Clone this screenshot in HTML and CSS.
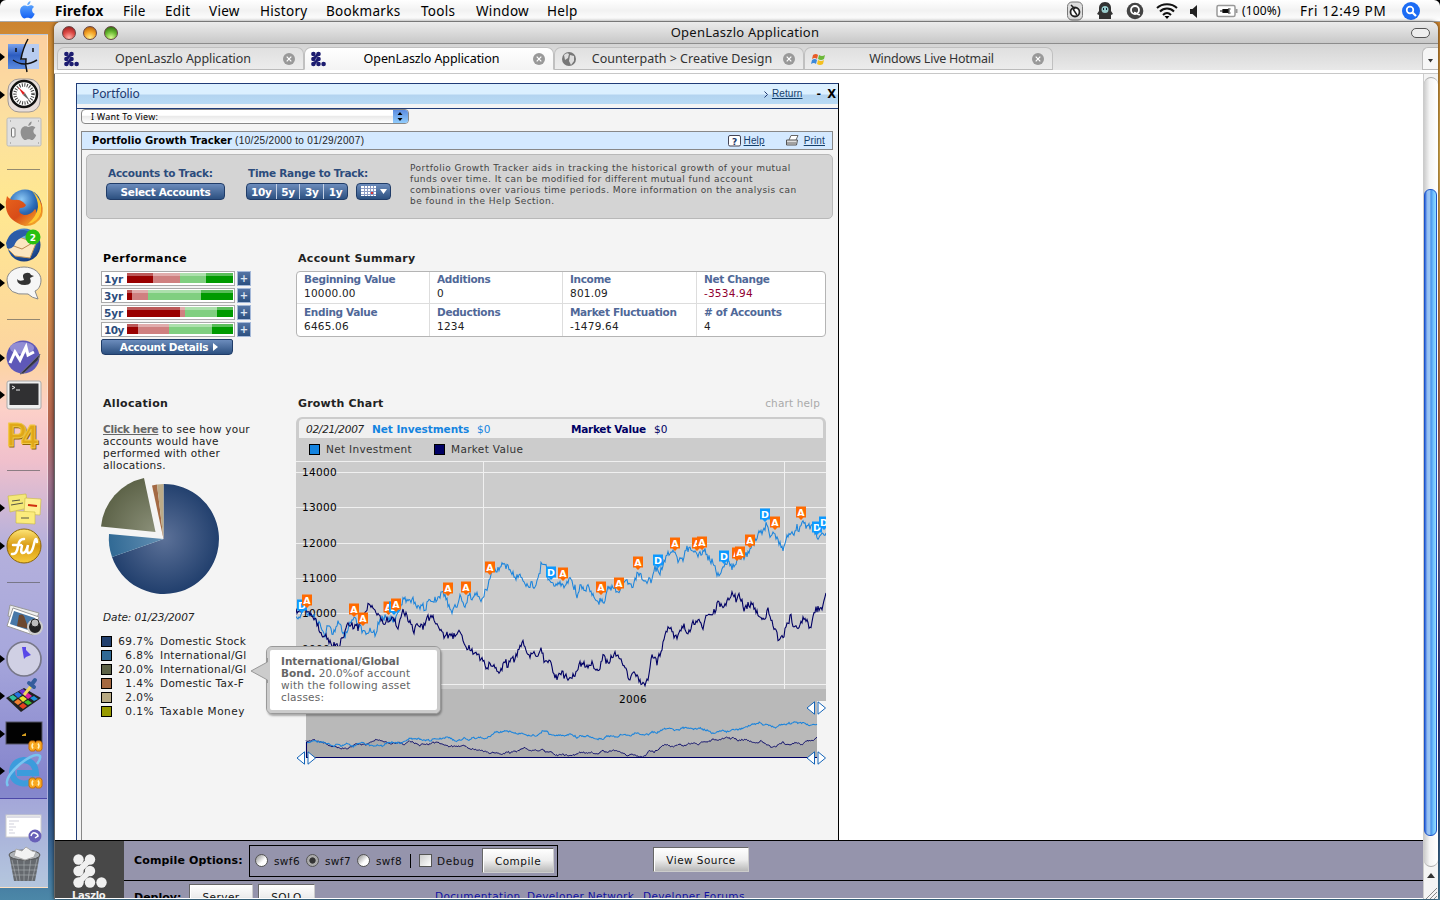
FILE: index.html
```html
<!DOCTYPE html>
<html lang="en">
<head>
<meta charset="utf-8">
<title>OpenLaszlo Application</title>
<link rel="stylesheet" href="styles.css">
</head>
<body>
<svg class="defs" width="0" height="0">
  <defs>
    <radialGradient id="gBlue" cx=".4" cy=".3" r=".8"><stop offset="0" stop-color="#8cc8f4"/><stop offset=".5" stop-color="#2c6cb8"/><stop offset="1" stop-color="#102c6c"/></radialGradient>
    <linearGradient id="gFire" x1="0" y1="0" x2="1" y2="1"><stop offset="0" stop-color="#e8641c"/><stop offset=".5" stop-color="#d84c18"/><stop offset="1" stop-color="#ffc832"/></linearGradient>
    <linearGradient id="gGold" x1="0" y1="0" x2="0" y2="1"><stop offset="0" stop-color="#ffe678"/><stop offset=".5" stop-color="#d89a10"/><stop offset="1" stop-color="#f8cc3c"/></linearGradient>
    <linearGradient id="gFind" x1="0" y1="0" x2="0" y2="1"><stop offset="0" stop-color="#7ca4ec"/><stop offset=".45" stop-color="#2c5cc0"/><stop offset="1" stop-color="#5c8ce0"/></linearGradient>
    <linearGradient id="gApple" x1="0" y1="0" x2="0" y2="1"><stop offset="0" stop-color="#6cb4ff"/><stop offset="1" stop-color="#1460f4"/></linearGradient>
    <radialGradient id="pNavy" gradientUnits="userSpaceOnUse" cx="64" cy="60" r="56"><stop offset="0" stop-color="#5c7198"/><stop offset="1" stop-color="#213f6d"/></radialGradient>
    <radialGradient id="pBlue" gradientUnits="userSpaceOnUse" cx="64" cy="60" r="56"><stop offset="0" stop-color="#6490b4"/><stop offset="1" stop-color="#306994"/></radialGradient>
    <radialGradient id="pOlive" gradientUnits="userSpaceOnUse" cx="55" cy="53" r="56"><stop offset="0" stop-color="#8a8f78"/><stop offset="1" stop-color="#5c6247"/></radialGradient>
    <symbol id="dots" viewBox="0 0 34 36"><g fill="currentColor"><circle cx="5.500" cy="6.500" r="5.200"/><circle cx="17" cy="6.500" r="5.200"/><circle cx="5.500" cy="18" r="5.200"/><circle cx="17" cy="18" r="5.200"/><circle cx="5.500" cy="29.500" r="5.200"/><circle cx="17" cy="29.500" r="5.200"/><circle cx="28.500" cy="29.500" r="5.200"/></g><path d="M16 7.500L6.500 17M16 19L6.500 28.500" stroke="currentColor" stroke-width="6"/></symbol>
    <symbol id="apple" viewBox="0 0 16 18"><path d="M11 0C11 2.500 9.500 4 7.800 4.200 7.700 2.200 9.200.5 11 0zM8 5.200c1 0 1.800-.9 3.300-.9 1.400 0 2.500.7 3.200 1.700-2.800 1.700-2.400 5.500.7 6.700-.6 1.900-2.200 4.800-4 4.800-1.200 0-1.600-.7-3.100-.7s-2 .7-3.100.7C2.800 17.500.6 13.300.6 10.100c0-3.400 2.100-5.600 4.400-5.600 1.400 0 2.200.7 3 .7z"/></symbol>
    <symbol id="close" viewBox="0 0 12 12"><circle cx="6" cy="6" r="6" fill="#999"/><path d="M3.700 3.700l4.600 4.600M8.300 3.700L3.700 8.300" stroke="#fff" stroke-width="1.200"/></symbol>
    <symbol id="badge" viewBox="0 0 14 12"><path d="M2 1h4l1 2 1-2h4l1.500 2v6L12 11H8L7 9l-1 2H2L.5 9V3z" fill="#f8a820" stroke="#c86c08"/><path d="M4.500 3.500q-2 2.500 0 5M9.500 3.500q2 2.500 0 5" stroke="#fff4c0" stroke-width="1.500" fill="none"/></symbol>
    <symbol id="slider" viewBox="0 0 21 14"><path d="M8.500.8v12.400L1 7zM12 .8v12.400L19.500 7z" fill="#fff" stroke="#1464b8"/></symbol>
  </defs>
</svg>

<header class="menubar">
  <svg class="apple" width="16" height="18" fill="url(#gApple)"><use href="#apple"/></svg>
  <nav class="menus">
    <b class="m1">Firefox</b><span class="m2">File</span><span class="m3">Edit</span><span class="m4">View</span><span class="m5">History</span><span class="m6">Bookmarks</span><span class="m7">Tools</span><span class="m8">Window</span><span class="m9">Help</span>
  </nav>
  <div class="status">
    <svg width="18" height="20"><rect x="1.500" y="1" width="15" height="18" rx="4.500" fill="#ddd" stroke="#777"/><circle cx="9" cy="11" r="4.500" fill="#fff" stroke="#222" stroke-width="1.800"/><path d="M7 8l4 6M5 4l4 4" stroke="#222" stroke-width="1.500"/></svg>
    <svg width="18" height="20"><path d="M9 1c4 0 6 3 6 6v3l2 3-2 1v4H3v-4l-2-1 2-3V7c0-3 2-6 6-6z" fill="#333"/><circle cx="9" cy="8.500" r="3.500" fill="#9cc"/><path d="M7.500 7v2M10.500 7v2" stroke="#123"/></svg>
    <svg width="18" height="20"><circle cx="9" cy="10" r="8.300" fill="#444"/><circle cx="9" cy="9" r="4" fill="none" stroke="#fff" stroke-width="1.800"/><path d="M8 11.500c3 0 3 3 6 2" stroke="#fff" stroke-width="1.500" fill="none"/></svg>
    <svg width="22" height="20"><g fill="none" stroke="#111" stroke-width="2"><path d="M1 7c5.500-5 14.500-5 20 0M4 10.500c4-4 10-4 14 0M7 14c2.500-2.500 5.500-2.500 8 0"/></g><path d="M11 18l-2.500-3h5z"/></svg>
    <svg width="10" height="20"><path d="M0 8h2.500L7 4v13L2.500 13H0z" fill="#222"/></svg>
    <svg class="batt" width="22" height="20"><rect x="1" y="4.500" width="18" height="11" rx="1.500" fill="#fff" stroke="#999" stroke-width="1.500"/><path d="M20.500 8v4" stroke="#999" stroke-width="2"/><path d="M4 10h10M7 8.500h5v3H7zM12 8h2.500M12 12h2.500" stroke="#111" stroke-width="1.200"/></svg>
    <span class="pct">(100%)</span><span class="clock">Fri 12:49 PM</span>
    <svg width="18" height="20"><circle cx="9" cy="10" r="9" fill="#1c6cf4"/><circle cx="8" cy="9" r="3.300" fill="none" stroke="#fff" stroke-width="1.700"/><path d="M10.500 11.500l3.500 3.500" stroke="#fff" stroke-width="2.200"/></svg>
  </div>
</header>

<main class="desktop">
  <aside class="dock">
    <div class="slot run"><svg><rect x="8" y="6" width="31" height="25" fill="url(#gFind)"/><path d="M26 6h13v25H26.500l-1-9H21q0-8 5-16z" fill="#b8ccf0"/><path d="M28 1q-5 9-7 20h5q-1 6 1 13M13 22q11 8 24 0M16 10v4M33 10v4" fill="none" stroke="#111" stroke-width="1.500"/></svg></div>
    <div class="slot run"><svg><rect x="8" y="3" width="32" height="33" rx="11" fill="#e8deda" stroke="#a09894"/><circle cx="24" cy="18" r="13" fill="#fff" stroke="#111" stroke-width="2.500"/><circle cx="24" cy="18" r="9" fill="none" stroke="#444" stroke-dasharray="1 1.500" stroke-width="3.500"/><path d="M18 11l7 6-2 2z" fill="#e02020"/><path d="M30 25l-7-6 2-2z" fill="#666"/></svg></div>
    <div class="slot"><svg><rect x="7" y="5" width="34" height="28" rx="1.500" fill="#e0e0e0" stroke="#bbb"/><rect x="11.500" y="15" width="3.500" height="9" rx="1" fill="#f8f8f8" stroke="#777"/><svg x="20" y="8" width="17" height="20" fill="#909090"><use href="#apple"/></svg><path d="M10 8h1M38 8h1M10 30h1M38 30h1" stroke="#888"/></svg></div>
    <div class="slot sep"></div>
    <div class="slot run"><svg><circle cx="25" cy="18" r="16.500" fill="url(#gBlue)"/><path d="M7 8q3 4 7 4 5-1 9 2l3 3q-1 3-6 3-3 5 4 7 7 0 11-6 2 1 1 5 5-5 4-14 4 7 2 16-5 10-17 10Q8 33 6 20q-1-6 1-12z" fill="url(#gFire)"/><path d="M32 3q11 8 9 21-3 10-13 12 9-8 10-17 0-9-6-16z" fill="#ffc832"/></svg></div>
    <div class="slot run"><svg><circle cx="24" cy="19" r="16.500" fill="url(#gBlue)"/><path d="M8 23l11-12 17 6-6 15-15-2z" fill="#fbe6c0" stroke="#c89858"/><path d="M11 19l11 4 12-7" fill="none" stroke="#b88850"/><path d="M6 17Q10 3 24 4q6 1 10 5-8-1-13 3-5 2-7 8-4 4-7 2z" fill="#2c5ca8"/><circle cx="33" cy="11" r="7.500" fill="#28c010"/><text x="33" y="14.500" class="cnt">2</text></svg></div>
    <div class="slot run"><svg><path d="M24 3c10 0 17 6 17 13 0 6-3 10-6 11l3 8q-6-1-10-5-21 2-21-14C7 9 14 3 24 3z" fill="#f6f6f6" stroke="#888"/><path d="M17 15q2 3 7 1-3-6 2-7 4-1 5 2l3 1-4 2q3 7-5 7-8 0-8-6z" fill="#333"/></svg></div>
    <div class="slot sep"></div>
    <div class="slot run"><svg><circle cx="23" cy="18" r="16.500" fill="#5e58b8"/><ellipse cx="22" cy="9" rx="12" ry="6" fill="#a8a4e0" opacity=".7"/><path d="M10 24l5-11 5 8 6-13 2 8 6-3" fill="none" stroke="#fff" stroke-width="3"/><path d="M20 35l20-20-2 6-14 13z" fill="#334" stroke="#667"/></svg></div>
    <div class="slot run"><svg><rect x="7" y="5" width="34" height="28" rx="2" fill="#eee" stroke="#aaa"/><rect x="9.500" y="7.500" width="29" height="21.500" fill="#303032"/><path d="M12 10l3 1.500-3 1.500M16 14h4" stroke="#eee" fill="none"/></svg></div>
    <div class="slot"><svg class="over"><g transform="translate(7 32) scale(.86 1)"><text x="1" y="1" class="p4b">P</text><text x="0" y="0" class="p4">P</text><text x="18" y="3" class="p4b">4</text><text x="17" y="2" class="p4">4</text></g></svg></div>
    <div class="slot sep"></div>
    <div class="slot run"><svg><path d="M8 7l18-2 2 14-18 4z" fill="#f4e878" stroke="#c8b840" stroke-width=".6"/><path d="M25 9l16 1-1 16-16-1z" fill="#fff094" stroke="#c8b840" stroke-width=".6"/><path d="M16 22l19 1v12l-19-1z" fill="#fcec7c" stroke="#c8b840" stroke-width=".6"/><path d="M12 12l8-1M11 16l12-2M21 29h8" stroke="#554"/><path d="M28 16l9 1" stroke="#d03010" stroke-width="2"/></svg></div>
    <div class="slot run"><svg><circle cx="24" cy="19" r="17" fill="url(#gGold)" stroke="#8c6408"/><path d="M12 27q5 1 6-8 1-7 6-7M13 18h8M22 19q-2 7 1 7t5-8q-2 8 1 8t5-9 3-2" fill="none" stroke="#fff" stroke-width="2.500" stroke-linecap="round"/></svg></div>
    <div class="slot sep"></div>
    <div class="slot"><svg><path d="M10 3l29 8-4 9-27-6z" fill="#eee" stroke="#999"/><path d="M13 6l26 9-6 18-26-9z" fill="#fff" stroke="#999"/><path d="M14 9l21 7-4 13-21-7z" fill="#4878a8"/><path d="M19 13q5-2 6 4l4 10-12-3z" fill="#6c4830"/><circle cx="35" cy="25" r="7" fill="#222" stroke="#ccc" stroke-width="2"/><circle cx="35" cy="21" r="4" fill="#bbb" stroke="#222"/></svg></div>
    <div class="slot run"><svg><circle cx="24" cy="19" r="17" fill="#d0d0e4" stroke="#777788" stroke-width="1.700"/><path d="M24 19l-2-12h4v3l5 5-5 2z" fill="#5848e8"/></svg></div>
    <div class="slot run"><svg><path d="M6 21l18-10 17 10-20 14z" fill="#222"/><path d="M9 20l4-2 4 3-4 3z" fill="#30c0a0"/><path d="M14 17l4-2 4 3-4 3z" fill="#2870e0"/><path d="M19 14l4-2 4 3-4 3z" fill="#7030d0"/><path d="M14 25l4-3 4 3-4 3z" fill="#f08030"/><path d="M19 21l4-2 4 3-4 3z" fill="#e8e030"/><path d="M24 18l4-2 4 3-4 3z" fill="#e020a0"/><path d="M19 29l4-3 4 3-4 3z" fill="#e84020"/><path d="M24 25l4-2 4 3-4 2z" fill="#40c030"/><path d="M30 21l4-2 4 3-4 2z" fill="#2090e0"/><path d="M24 18l8-10" stroke="#f0d860" stroke-width="3"/><path d="M29 6l5 4M32 7l3-4" stroke="#345c9c" stroke-width="4" stroke-linecap="round"/></svg></div>
    <div class="slot run"><svg><rect x="6" y="7" width="36" height="22" fill="#020202" stroke="#556"/><path d="M22 20l4-2v3h-4z" fill="#d8a020"/><svg x="28" y="25" width="15" height="12"><use href="#badge"/></svg></svg></div>
    <div class="slot run"><svg><path d="M35 26Q30 32 23 31.500 12 30 12 19 13 9 24 8q11 1 12 13H17" fill="none" stroke="#3c9cdc" stroke-width="6"/><path d="M8 34Q3 27 20 12 35 0 40 4q1 3-3 8" fill="none" stroke="#78c4f0" stroke-width="2.500"/><svg x="28" y="25" width="15" height="12"><use href="#badge"/></svg></svg></div>
    <div class="lower">
      <div class="slot"><svg><rect x="6" y="6" width="35" height="22" fill="#fff" stroke="#ccc"/><path d="M7 8h33" stroke="#bbc"/><path d="M9 12h10M9 15h5M9 18h7M9 21h4M9 24h6" stroke="#bbc" stroke-width=".7"/><circle cx="35" cy="27" r="6.500" fill="#6860b8"/><path d="M31 27q1-4 4-3t3 3l-3 2" stroke="#fff" fill="none" stroke-width="1.500"/></svg></div>
      <div class="slot"><svg><path d="M9 8h31l-5 27H14z" fill="#65696e"/><path d="M12 14l5 21M17 12l3 23M24 12v23M31 12l-3 23M37 13l-5 22M11 19h27M12 24h25M13 29h23" stroke="#a5a9ad" stroke-width=".7"/><ellipse cx="24.500" cy="9" rx="15.500" ry="5" fill="#aeb2b6" stroke="#555"/><path d="M14 10l2-7 6 2 4-4 6 4 4 1-2 5-9 3z" fill="#f2f2f2" stroke="#aaa"/></svg></div>
    </div>
  </aside>

  <section class="window">
    <div class="titlebar">
      <i class="light red"></i><i class="light amber"></i><i class="light green"></i>
      <span class="wtitle">OpenLaszlo Application</span>
      <i class="pill"></i>
    </div>
    <div class="tabs">
      <div class="tab t1"><svg class="fav" width="15" height="16"><use href="#dots"/></svg><span>OpenLaszlo Application</span><svg width="12" height="12"><use href="#close"/></svg></div>
      <div class="tab t2 on"><svg class="fav" width="15" height="16"><use href="#dots"/></svg><span>OpenLaszlo Application</span><svg width="12" height="12"><use href="#close"/></svg></div>
      <div class="tab t3"><svg width="16" height="16"><circle cx="8" cy="8" r="7" fill="#777"/><path d="M3 4q3-3 5-1l-1 4-3 2zM9 4l4 1v5l-3 4-2-4z" fill="#ddd"/></svg><span>Counterpath &gt; Creative Design</span><svg width="12" height="12"><use href="#close"/></svg></div>
      <div class="tab t4"><svg width="16" height="16"><path d="M2 4q3-2 5 0L6 8Q4 6 1 8z" fill="#e85c28"/><path d="M8 4q3 2 6 0l-1 4q-3 2-6 0z" fill="#6cb838"/><path d="M1 9q3-2 5 0l-1 4q-2-2-5 0z" fill="#3c88d8"/><path d="M7 9q3 2 6 0l-1 4q-3 2-6 0z" fill="#f4c020"/></svg><span>Windows Live Hotmail</span><svg width="12" height="12"><use href="#close"/></svg></div>
      <div class="tabmenu"><svg width="5" height="4"><path d="M0 0h5L2.500 3.500z" fill="#333"/></svg></div>
    </div>

    <div class="view">
      <div class="page">
        <div class="canvas">
          <article class="portfolio">
            <header class="phead"><span class="pname">Portfolio</span><span class="ret"><svg width="5" height="7"><path d="M.5.5l3 3-3 3" fill="none" stroke="#203870"/></svg><a>Return</a></span><b class="min">-</b><b class="x">X</b></header>
            <div class="pline"></div>
            <div class="select"><span>I Want To View:</span><i><svg width="14" height="13"><path d="M7 2l2.500 3h-5zM7 11L4.500 8h5z"/></svg></i></div>
            <div class="tracker">
              <div class="thead"><b>Portfolio Growth Tracker</b><span class="range">(10/25/2000 to 01/29/2007)</span>
                <svg width="13" height="12"><rect x=".5" y=".5" width="12" height="10.500" rx="1.500" fill="#fff" stroke="#445"/><text x="6.500" y="9.500" class="q">?</text></svg><a class="help">Help</a>
                <svg width="14" height="12"><path d="M4 5l2-4.500h7L11 5" fill="#fff" stroke="#666"/><path d="M1.500 5h11l-1 5h-10z" fill="#ddd" stroke="#555"/><path d="M2 8h9" stroke="#666"/></svg><a class="print">Print</a>
              </div>
              <div class="controls">
                <div class="c1"><label>Accounts to Track:</label><div class="btn sel">Select Accounts</div></div>
                <div class="c2"><label>Time Range to Track:</label><div class="row"><div class="btn seg"><span>10y</span><span>5y</span><span>3y</span><span>1y</span></div><div class="btn cal"><svg width="30" height="12"><rect x="0" y="1" width="15" height="10" fill="#fff"/><path d="M0 3.500h15M0 6.500h15M0 9.500h15M3.500 1v10M6.500 1v10M9.500 1v10M12.500 1v10" stroke="#8c9cc4"/><path d="M10 7h2v2h-2z" fill="#d33"/><path d="M19 4h7l-3.500 5z" fill="#fff"/></svg></div></div></div>
                <p>Portfolio Growth Tracker aids in tracking the historical growth of your mutual<br>funds over time. It can be modified for different mutual fund account<br>combinations over various time periods. More information on the analysis can<br>be found in the Help Section.</p>
              </div>
              <div class="grid">
                <section class="perf">
                  <h3 class="black">Performance</h3>
                  <div class="bar"><b>1yr</b><i class="track p1"></i><em>+</em></div>
                  <div class="bar"><b>3yr</b><i class="track p3"></i><em>+</em></div>
                  <div class="bar"><b>5yr</b><i class="track p5"></i><em>+</em></div>
                  <div class="bar"><b class="ten">10y</b><i class="track p10"></i><em>+</em></div>
                  <div class="btn details">Account Details <svg width="5" height="8"><path d="M0 0l5 4-5 4z" fill="#fff"/></svg></div>
                </section>
                <section class="summary">
                  <h3>Account Summary</h3>
                  <div class="cells">
                    <div><b>Beginning Value</b><span>10000.00</span></div><div><b>Additions</b><span>0</span></div><div><b>Income</b><span>801.09</span></div><div><b>Net Change</b><span class="neg">-3534.94</span></div>
                    <div><b>Ending Value</b><span>6465.06</span></div><div><b>Deductions</b><span>1234</span></div><div><b>Market Fluctuation</b><span>-1479.64</span></div><div><b># of Accounts</b><span>4</span></div>
                  </div>
                </section>
                <section class="alloc">
                  <h3>Allocation</h3>
                  <p><b>Click here</b> to see how your<br>accounts would have<br>performed with other<br>allocations.</p>
                  <svg class="pie" width="120" height="118">
                    <path d="M63.500 61V6A55 55 0 1 1 12 79z" fill="url(#pNavy)"/>
                    <path d="M63.500 61L12 79A55 55 0 0 1 9 56z" fill="url(#pBlue)"/>
                    <path d="M55.500 54L1 48.500A55 55 0 0 1 44 0z" fill="url(#pOlive)"/>
                    <path d="M63.500 61L52 7.500l5-1z" fill="#a46a44"/><path d="M63.500 61L57 6.500l6.500-.5z" fill="#bcab88"/>
                  </svg>
                  <div class="date">Date: 01/23/2007</div>
                  <ul>
                    <li><i class="k1"></i><span>69.7%</span><u>Domestic Stock</u></li><li><i class="k2"></i><span>6.8%</span><u>International/Gl</u></li><li><i class="k3"></i><span>20.0%</span><u>International/Gl</u></li><li><i class="k4"></i><span>1.4%</span><u>Domestic Tax-F</u></li><li><i class="k5"></i><span>2.0%</span><u></u></li><li><i class="k6"></i><span>0.1%</span><u class="tm">Taxable Money</u></li>
                  </ul>
                </section>
                <section class="growth">
                  <div class="ghead"><h3>Growth Chart</h3><span>chart help</span></div>
                  <div class="gbox">
                    <div class="readout"><em>02/21/2007</em><b class="ni">Net Investments</b><span class="niv">$0</span><b class="mv">Market Value</b><span class="mvv">$0</span></div>
                    <div class="legend"><i class="lb"></i><span>Net Investment</span><i class="ln"></i><span>Market Value</span></div>
                  </div>
                  <svg id="plot" width="532" height="305" viewBox="296 461 532 305">
                    <path d="M296 461h530v228H296z" fill="#ccc"/><path d="M296 689h530v12h-9v57H306v-57h-10z" fill="#b9b9b9"/>
                    <path d="M296 461.500h530M296 472.500h530M296 507.500h530M296 543.500h530M296 578.500h530M296 613.500h530M296 649.500h530M296 684.500h530M483.500 462v227M784.500 462v227" stroke="#f0f0f0"/>
                    <g class="axis"><text x="302" y="476">14000</text><text x="302" y="511">13000</text><text x="302" y="547">12000</text><text x="302" y="582">11000</text><text x="302" y="617">10000</text><text x="302" y="653">9000</text><text x="619" y="703">2006</text></g>
                  </svg>
                </section>
              </div>
            </div>
          </article>
          <div class="tip"><svg width="18" height="26"><path d="M17.500 1v4L1 14l16.500 9v3" fill="#ccc" stroke="#999"/></svg><div><b>International/Global<br>Bond.</b> 20.0%of account<br>with the following asset<br>classes:</div></div>
        </div>
        <footer class="dev">
          <div class="logo"><svg width="34" height="36"><use href="#dots"/></svg><b>Laszlo</b></div>
          <div class="rows">
            <div class="r1"><b>Compile Options:</b>
              <div class="opts"><i class="radio"></i><span>swf6</span><i class="radio dot"></i><span>swf7</span><i class="radio"></i><span>swf8</span><i class="vbar"></i><i class="check"></i><span class="dbg">Debug</span><button class="cmp">Compile</button></div>
              <button class="vs">View Source</button></div>
            <div class="r2"><b>Deploy:</b><button class="srv">Server</button><button class="solo">SOLO</button><a class="d1">Documentation</a><a class="d2">Developer Network</a><a class="d3">Developer Forums</a></div>
          </div>
        </footer>
      </div>
      <div class="scroll"><div class="gutter"><i class="thumb"></i></div><div class="arrow"><svg width="8" height="5"><path d="M4 0l4 5H0z" fill="#333"/></svg></div><svg width="14" height="13"><path d="M2 13L13 2M6 13l7-7M10 13l3-3" stroke="#888"/></svg></div>
    </div>
  </section>
</main>
<script src="chart.js"></script>
</body>
</html>
```
FILE: chart.js
```js
// Series are key points "x,y"; a small deterministic jitter fills in the daily movement.
const net = "296,620 305,610 315,617 322,630 325,635 328,625 333,633 338,622 345,635 350,622 354,617 360,628 367,635 370,627 375,635 380,618 388,617 395,622 400,607 404,596 407,602 413,600 417,608 422,605 425,610 428,600 433,602 438,597 445,593 449,607 453,611 457,605 460,598 465,610 468,595 473,597 476,593 481,603 485,592 489,583 492,567 498,570 503,564 510,568 515,578 520,573 525,587 532,583 534,589 538,580 542,561 545,563 548,577 555,587 558,581 563,587 570,580 575,588 577,596 580,586 585,590 588,587 592,595 596,601 605,602 608,587 613,588 619,593 623,580 630,582 633,587 638,573 642,578 651,582 655,568 660,573 664,560 668,555 675,553 678,560 683,560 686,550 690,547 698,555 704,550 708,557 712,562 717,573 720,573 723,569 728,563 732,568 737,560 743,557 748,553 753,545 758,535 763,532 767,523 770,537 773,530 778,542 783,549 787,537 790,533 795,532 797,525 799,531 802,520 805,526 812,527 818,537 826,533";
const market = "296,612 305,606 315,620 322,635 327,637 331,645 338,646 343,637 348,625 353,626 358,628 365,612 368,605 373,607 378,615 383,623 390,618 395,620 398,628 402,615 404,610 408,620 414,630 418,622 423,627 428,618 433,618 438,628 443,635 450,635 455,637 459,629 463,642 468,648 475,652 483,660 487,668 490,662 495,667 500,672 505,660 508,667 512,657 515,660 520,645 523,643 528,657 532,652 537,657 541,648 545,663 550,662 555,678 562,673 567,678 573,677 580,663 587,665 591,663 595,668 600,667 603,657 608,663 615,652 620,662 623,663 630,680 635,673 640,683 645,687 648,678 652,657 657,662 662,648 664,642 667,630 671,628 675,637 678,638 684,625 688,635 693,623 698,620 703,627 707,615 713,615 718,603 722,608 727,602 733,593 737,602 739,593 744,608 748,605 753,605 759,618 765,617 768,611 773,623 778,638 783,639 787,623 791,617 794,628 800,625 804,617 810,628 815,610 822,608 826,593";
const marks = "D302,606 A307,601 A354,610 A363,619 A388.5,608 D394,608 A396,605 A448,589 A466,588 A490,568 D551,573 A563,574 A601,588 A619,584 A638,563 D658,561 A675,544 A697,544 A702,543 D724,557 A737,554 A740,553 A750,541 D765,515 A775,523 A801,513 D817,528 D824,523";
const plot = document.getElementById("plot");
const add = (tag, attrs, text) => {
  const el = document.createElementNS("http://www.w3.org/2000/svg", tag);
  for (const k in attrs) el.setAttribute(k, attrs[k]);
  if (text) el.textContent = text;
  plot.appendChild(el);
};
function walk(src, seed) {
  const pts = src.split(" ").map(p => p.split(",").map(Number)), out = [];
  const rnd = () => (seed = (seed * 16807) % 2147483647) / 2147483647 - 0.5;
  for (let i = 0; i < pts.length - 1; i++) {
    const [x0, y0] = pts[i], [x1, y1] = pts[i + 1];
    for (let x = x0; x < x1; x++) out.push([x, y0 + (y1 - y0) * (x - x0) / (x1 - x0) + rnd() * 7]);
  }
  out.push(pts[pts.length - 1]);
  return out;
}
const path = pts => "M" + pts.map(p => p[0].toFixed(1) + " " + p[1].toFixed(1)).join("L");
const mini = pts => pts.map(([x, y]) => [306 + (x - 296) * 511 / 530, 741.5 + (y - 613) * 0.215]);
const n = walk(net, 71), m = walk(market, 333);
add("path", { d: path(mini(m)) + "L817 757L306 757Z", fill: "#aaa" });
add("path", { d: path(mini(m)), class: "navy thin" });
add("path", { d: path(mini(n)), class: "sky" });
add("path", { d: "M306 757.5H817M306.5 742V757", class: "navy" });
add("path", { d: path(n), class: "sky" });
add("path", { d: path(m), class: "navy" });
for (const t of marks.split(" ")) {
  const [x, y] = t.slice(1).split(",").map(Number);
  add("path", { d: `M${x - 5} ${y - 6.5}h10v11h-2.500l-2.500 2.500l-2.500-2.500h-2.500z`, fill: t[0] === "A" ? "#ff6a00" : "#0d99ff" });
  add("text", { x, y: y + 2.7, class: "mark" }, t[0]);
}
add("path", { d: "M826 461h3v228h-3z", fill: "#f4f4f4" });
for (const [x, y] of [[296, 751], [806, 751], [806, 701]]) add("use", { href: "#slider", x, y, width: 21, height: 14 });
```
FILE: styles.css
```css
* { box-sizing: border-box; }
html, body { margin: 0; height: 100%; }
body { width: 1440px; height: 900px; overflow: hidden; display: flex; flex-direction: column; background: #000; font: 11px/14px "DejaVu Sans", Verdana, sans-serif; color: #222; }
svg { display: block; flex: none; }
.defs { position: absolute; }
i { font-style: normal; }
h3, p, ul { margin: 0; padding: 0; }

.menubar { height: 22px; flex: none; display: flex; align-items: center; border-radius: 6px 6px 0 0; background: linear-gradient(#fff, #f2f2f2 50%, #fff); border-bottom: 1px solid #aaa; font: 13.500px/20px "Noto Sans", sans-serif; color: #000; letter-spacing: .3px; }
.apple { margin: -1px 0 0 19px; width: 17px; }
.menus { display: flex; margin-left: 19px; flex: 1; }
.m1 { width: 68px; } .m2 { width: 42px; } .m3 { width: 44px; } .m4 { width: 51px; } .m5 { width: 66px; } .m6 { width: 95px; } .m7 { width: 55px; } .m8 { width: 71px; }
.status { display: flex; align-items: center; gap: 12px; padding-right: 20px; }
.status .batt { margin-left: 4px; }
.pct { font-size: 12px; margin-left: -8px; width: 39px; white-space: nowrap; letter-spacing: .15px; }
.clock { margin-left: 7px; width: 90px; white-space: nowrap; letter-spacing: .7px; }

.desktop { flex: 1; display: flex; background: linear-gradient(#cc8430, #e8b850 15%, #d89048 30%, #b86850 45%, #a07088 52%, #5c64a4 62%, #302c84 78%, #30558c 90%, #4c88a8); }
.dock { width: 48px; margin: 12px 6px 13px 0; padding-top: 3px; background: linear-gradient(#fcd0a0, #fce0a0 10%, #ffe890 20%, #fcd4a0 38%, #fcd0c8 44%, #f0c0cc 50%, #b4b0dc 60%, #a8a8dc 72%, #8484cc 88%, #8ca8cc); border: 1px solid rgba(255,255,255,.35); border-left: 0; }
.slot { height: 37.600px; position: relative; }
.slot > svg { width: 48px; height: 38px; } .slot > .over { overflow: visible; }
.run::before { content: ""; position: absolute; left: 0; top: 15px; border: 4.500px solid transparent; border-left: 5px solid #000; border-right: 0; }
.sep::before { content: ""; position: absolute; left: 7px; right: 7px; top: 18px; border-top: 1px solid rgba(90,90,90,.65); }
.lower { margin-top: 8px; padding-top: 10px; border-top: 1px solid #4c48a8; height: 89px; background: linear-gradient(rgba(255,255,255,.25), rgba(255,255,255,.35)); }
.cnt { font: bold 9px "DejaVu Sans", sans-serif; fill: #fff; text-anchor: middle; }
.p4, .p4b { font: bold 34px "Liberation Sans", sans-serif; fill: #e0a818; stroke: #f0c848; stroke-width: 1px; letter-spacing: 0; }
.p4b { fill: #8c6408; stroke: #8c6408; }

.window { width: 1384px; height: 877px; flex: none; display: flex; flex-direction: column; border-radius: 7px 7px 0 0; overflow: hidden; background: #e6e6e6; box-shadow: 0 0 4px rgba(0,0,0,.7); }
.titlebar { height: 22px; flex: none; display: flex; align-items: center; padding: 0 7px 0 8px; background: linear-gradient(#ececec, #c8c8c8); border-bottom: 1px solid #8c8c8c; }
.light { width: 14px; height: 14px; border-radius: 50%; border: 1px solid #644; margin-right: 7px; }
.red { background: radial-gradient(circle at 50% 90%, #ffb4ac, #dc4844 50%, #8c1818); }
.amber { background: radial-gradient(circle at 50% 90%, #fff08c, #f4a024 50%, #a45408); }
.green { background: radial-gradient(circle at 50% 90%, #dcff94, #68b830 50%, #205c08); }
.wtitle { flex: 1; text-align: center; font: 13px/20px "Noto Sans", sans-serif; color: #111; letter-spacing: .25px; margin: -2px 0 0 -46px; }
.pill { width: 19px; height: 10px; border: 1.500px solid #555; border-radius: 6px; background: #eee; margin-right: 1px; }
.tabs { height: 30px; flex: none; display: flex; align-items: stretch; padding: 3px 0 3px 3px; background: linear-gradient(#d4d4d4, #e8e8e8 88%, #fff 90%); border-bottom: 1px solid #c8c8c8; }
.tab { display: flex; align-items: center; justify-content: space-between; padding: 0 8px 0 6px; border: 1px solid #c0c0c0; border-bottom-color: #bbb; border-radius: 7px 7px 0 0; background: linear-gradient(#e0e0e0, #ececec); font: 12.500px/18px "Noto Sans", sans-serif; color: #333; width: 250px; white-space: nowrap; }
.tab span { position: relative; left: 2px; }
.tab.on { background: linear-gradient(#fff, #f4f4f4); border-bottom-color: #f4f4f4; color: #000; }
.t1 { width: 247px; } .t4 { width: 249px; letter-spacing: -.2px; } .t1, .t2 { letter-spacing: -.08px; }
.t4 { letter-spacing: -.25px; }
.tab .fav { color: #1c1c70; }
.tabmenu { margin-left: auto; width: 16px; border: 1px solid #bbb; border-right: 0; border-radius: 6px 0 0 0; background: #f6f6f6; padding: 11px 0 0 5px; }
.view { flex: 1; display: flex; min-height: 0; background: #fff; border-left: 1px solid #666; }
.page { flex: 1; display: flex; flex-direction: column; min-width: 0; }
.canvas { height: 766px; flex: none; position: relative; padding: 9px 0 0 21px; overflow: hidden; }
.scroll { width: 15px; padding-top: 3px; background: #f4f4f4; border-left: 1px solid #ccc; display: flex; flex-direction: column; }
.gutter { height: 791px; padding-top: 111px; border-radius: 7px; border: 1px solid #aaa; border-width: 1px 0; background: linear-gradient(90deg, #ccc, #f4f4f4 40%, #fff); }
.thumb { display: block; height: 647px; width: 13px; border-radius: 6px; border: 1px solid #1c54c8; background: linear-gradient(90deg, #2c60d8, #90bcf0 20%, #a0c8f4 40%, #4894ec 55%, #70c0fc 75%, #90dcff); }
.arrow { height: 19px; padding: 6px 0 0 3px; }

.portfolio { width: 763px; height: 780px; background: #f4f4f4; border: 1px solid #203c78; border-right-color: #000; }
.phead { height: 20px; display: flex; align-items: center; padding: 0 2px 0 15px; background: linear-gradient(#dcf0ff 50%, #b4d4f0 55%, #b8daf4); }
.pname { font: 12px/20px "Noto Sans", sans-serif; color: #203870; flex: 1; letter-spacing: -.1px; }
.ret { font: 10px/20px "Liberation Sans", sans-serif; color: #103878; display: flex; align-items: center; gap: 3px; letter-spacing: .1px; }
.ret a, .thead a { text-decoration: underline; color: #14406c; }
.min { margin: 0 6px 0 14px; font-size: 11px; color: #000; } .x { font-size: 11.500px; color: #000; }
.pline { height: 5px; border-bottom: 1px solid #203c78; }
.select { margin: 0 0 0 4px; width: 328px; height: 15px; border: 1px solid #888; border-radius: 4px; display: flex; justify-content: space-between; background: linear-gradient(#fff 40%, #eaeaea 50%, #fff); font: 9px/14px "Noto Sans", sans-serif; color: #000; padding-left: 9px; overflow: hidden; letter-spacing: .2px; }
.select i { width: 15px; background: linear-gradient(#5c8ce0, #90ccfc); }
.tracker { margin: 7px 5px 0 4px; border-left: 1px solid #888; height: 712px; }
.thead { height: 19px; border: 1px solid #888; border-left: 0; background: #d4e9ff; display: flex; align-items: center; padding: 0 7px 0 10px; font-size: 10px; }
.thead b { color: #000; letter-spacing: .07px; }
.range { flex: 1; margin-left: 3px; font: 10px/17px "Liberation Sans", sans-serif; letter-spacing: .33px; }
.thead a { margin-left: 3px; font: 10px/17px "Liberation Sans", sans-serif; letter-spacing: .15px; } .thead a.help { margin-right: 20px; } .thead a.print { margin-left: 5px; }
.q { font: bold 9px "DejaVu Sans", sans-serif; text-anchor: middle; fill: #223c6c; }
.controls { margin: 4px 0 0 4px; width: 747px; height: 65px; border: 1px solid #b8b8b8; border-radius: 5px; background: #d4d4d4; display: flex; }
.c1 { width: 140px; margin: 11px 0 0 19px; } .c2 { width: 164px; margin-top: 11px; }
.controls label { display: block; height: 17px; font-weight: bold; font-size: 10.500px; color: #2c4c7c; padding-left: 2px; white-space: nowrap; letter-spacing: -.25px; }
.row { display: flex; gap: 8px; }
.btn { height: 17px; border: 1px solid #203c68; border-radius: 4px; background: linear-gradient(#6c8cbc, #2c5080); color: #fff; font-weight: bold; font-size: 10.500px; line-height: 16px; text-align: center; white-space: nowrap; letter-spacing: -.3px; }
.sel { width: 119px; }
.seg { width: 102px; display: flex; } .seg span { flex: 1; border-right: 1px solid #c4d0e4; height: 15px; } .seg span:first-child { flex: 1.250; } .seg span:last-child { border: 0; }
.cal { width: 35px; padding: 1px 0 0 4px; }
.controls p { font-size: 9px; line-height: 11px; margin-top: 8px; color: #444; white-space: nowrap; letter-spacing: .46px; }
.grid { display: grid; grid-template: 152px 1fr / 195px 531px; padding: 32px 0 0 19px; }
h3 { font-size: 11px; line-height: 14px; color: #222; white-space: nowrap; letter-spacing: .33px; }
.perf h3, .alloc h3 { padding-left: 2px; } .black { color: #000; }
.perf h3, .summary h3 { margin: 1px 0 5px; } .summary h3 { padding-left: 2px; }
.perf h3 { letter-spacing: .42px; }
.bar { width: 150px; height: 15px; margin-bottom: 2px; display: flex; background: linear-gradient(#aaa, #aaa) 0 0/134px 1px no-repeat, linear-gradient(#aaa, #aaa) 0 100%/134px 1px no-repeat, linear-gradient(#aaa, #aaa) 133px 0/1px 100% no-repeat, linear-gradient(#fff, #fff) 0 0/134px 100% no-repeat; }
.bar b { width: 26px; border: 1px solid #aaa; border-right: 0; color: #2c4c7c; font-size: 10.500px; line-height: 14px; padding-left: 2px; letter-spacing: -.1px; } .bar .ten { letter-spacing: -.5px; }
.track { width: 106px; height: 10px; margin: 2px 2px 0 0; box-shadow: inset 0 3px rgba(255,255,255,.35); }
.bar em { width: 14px; margin-left: 2px; font: bold 10px/13px "DejaVu Sans", sans-serif; color: #e0e8f4; text-align: center; background: linear-gradient(#5474a4, #2c5080); border: 1px solid #a4b8d8; }
.p1 { background: linear-gradient(90deg, #900 25%, #cf8080 25% 50%, #80cf80 50% 75%, #009a00 75%); }
.p3 { background: linear-gradient(90deg, #900 5%, #cf8080 5% 20%, #80cf80 20% 70%, #009a00 70%); }
.p5 { background: linear-gradient(90deg, #900 50%, #cf8080 50% 55%, #80cf80 55% 85%, #009a00 85%); }
.p10 { background: linear-gradient(90deg, #900 10%, #cf8080 10% 40%, #80cf80 40% 80%, #009a00 80%); }
.details { width: 132px; height: 16px; border-radius: 2px 2px 4px 4px; display: flex; justify-content: center; align-items: center; gap: 5px; padding-left: 4px; }
.cells { width: 530px; height: 66px; border: 1px solid #b4b4b4; border-radius: 4px; background: #fff; display: grid; grid-template-columns: 133px 133px 134px 1fr; grid-template-rows: 32px 32px; }
.cells div { padding: 0 0 0 7px; border-right: 1px solid #ddd; border-bottom: 1px solid #ddd; display: flex; flex-direction: column; }
.cells div:nth-child(4n) { border-right: 0; } .cells div:nth-child(n+5) { border-bottom: 0; padding-top: 1px; }
.cells b { color: #506898; font-size: 10.500px; letter-spacing: -.33px; } .cells span { font-size: 10.500px; letter-spacing: .2px; } .cells .neg { color: #900030; }
.alloc h3 { margin-top: -6px; margin-bottom: 12px; }
.alloc { font-size: 10.500px; }
.alloc p { padding-left: 2px; line-height: 12px; letter-spacing: .25px; white-space: nowrap; } .alloc p b { color: #666; text-decoration: underline; letter-spacing: -.33px; }
.pie { margin: 7px 0 0 -1px; }
.date { margin: 14px 0 10px 2px; font-style: italic; line-height: 14px; letter-spacing: -.07px; }
ul { list-style: none; } li { display: flex; height: 14px; line-height: 14px; align-items: center; }
li i { width: 11px; height: 11px; border: 1px solid #000; } li span { width: 42px; text-align: right; letter-spacing: .5px; } li u { width: 90px; margin-left: 6px; text-decoration: none; white-space: nowrap; letter-spacing: .3px; } li .tm { letter-spacing: .55px; }
.k1 { background: #213f6d; } .k2 { background: #306994; } .k3 { background: #5c6247; } .k4 { background: #a46840; } .k5 { background: #b8aa84; } .k6 { background: #989a00; }
.growth { margin-top: -6px; }
.ghead { display: flex; justify-content: space-between; padding: 0 7px 0 2px; margin-bottom: 6px; } .ghead h3 { letter-spacing: .2px; } .ghead span { color: #aaa; font-size: 10.500px; letter-spacing: .15px; margin-top: -1px; }
.gbox { width: 530px; height: 44px; padding: 2px 3px 0; border-radius: 6px 6px 0 0; background: #ccc; color: #333; font-size: 10.500px; }
.readout { height: 19px; display: flex; align-items: center; border-radius: 4px 4px 0 0; background: #f0f0f0; padding-left: 7px; color: #222; white-space: nowrap; }
.readout em { width: 66px; letter-spacing: -.25px; } .ni { width: 105px; color: #1484e0; letter-spacing: -.05px; } .niv { width: 94px; color: #1484e0; } .mv { width: 83px; color: #000064; letter-spacing: -.27px; } .mvv { color: #000064; }
.legend { height: 22px; display: flex; align-items: center; padding-left: 10px; letter-spacing: .33px; } .legend i { width: 11px; height: 11px; border: 1px solid #000; margin-right: 6px; } .legend span { width: 108px; } .lb { background: #1484e0; } .ln { background: #000064; }
.axis { font: 10.500px "DejaVu Sans", sans-serif; fill: #000; letter-spacing: .3px; }
.sky { fill: none; stroke: #1b84dc; stroke-width: 1.050px; } .navy { fill: none; stroke: #000064; stroke-width: 1.100px; } .thin { stroke-width: .9px; }
.mark { font: bold 9.500px "DejaVu Sans", sans-serif; fill: #fff; text-anchor: middle; }
.tip { position: absolute; left: 195px; top: 572px; display: flex; align-items: flex-start; } .tip svg { margin: 11px -2px 0 0; z-index: 1; }
.tip div { width: 175px; height: 68px; border: 1px solid #999; border-radius: 6px; background: #fff; box-shadow: inset 0 0 0 3px #ccc, 1px 2px 2px rgba(0,0,0,.3); padding: 8px 0 0 14px; font-size: 10.500px; line-height: 12px; color: #666; white-space: nowrap; letter-spacing: .2px; }
.tip b { letter-spacing: -.02px; }

.dev { height: 58px; border-top: 1px solid #000; display: flex; background: #9594ac; overflow: hidden; color: #111; }
.logo { width: 69px; background: #484848; color: #f0f0f0; padding: 12px 0 0 18px; } .logo b { font: bold 10px/12px "DejaVu Sans", sans-serif; display: block; margin-top: 1px; letter-spacing: -.3px; margin-left: -1px; }
.rows { flex: 1; } .r1 { height: 40px; border-bottom: 1px solid #000; display: flex; align-items: center; padding-left: 10px; } .r1 > b { width: 115px; color: #000; white-space: nowrap; letter-spacing: .15px; }
.opts { width: 309px; height: 32px; border: 1px solid #000; display: flex; align-items: center; padding-left: 5px; }
.radio { width: 13px; height: 13px; border-radius: 50%; border: 1px solid #555; background: linear-gradient(135deg, #888, #fff 60%); margin-right: 6px; } .dot { background: radial-gradient(#333 35%, #aaa 45%); }
.opts span { width: 32px; font-size: 10.500px; letter-spacing: .4px; padding-top: 1px; } .opts .dbg { width: 45px; letter-spacing: .6px; }
.vbar { width: 1px; height: 14px; background: #000; margin: 0 8px 0 2px; } .check { width: 13px; height: 13px; border: 1px solid #555; background: linear-gradient(135deg, #ccc, #fff); margin-right: 5px; }
button { font: 10.500px/14px "DejaVu Sans", sans-serif; border: 1px solid #666; border-right-color: #ccc; border-bottom-color: #ccc; background: linear-gradient(#fff, #eee 50%, #b8b8b8); padding: 0; color: #111; box-shadow: inset 1px 1px #fff; letter-spacing: .45px; white-space: nowrap; }
.cmp { width: 72px; height: 25px; } .vs { width: 96px; height: 25px; margin-left: 95px; margin-top: -2px; }
.r2 { display: flex; padding: 3px 0 0 10px; height: 40px; } .r2 b { width: 55px; margin-top: 7px; color: #000; } .r2 button { height: 25px; margin-right: 5px; } .srv { width: 64px; } .solo { width: 57px; }
.r2 a { color: #1010a0; text-decoration: underline; margin-top: 5px; white-space: nowrap; font-size: 10.500px; letter-spacing: .35px; } .d1 { margin-left: 115px; width: 92px; } .d2 { width: 116px; } .d3 { letter-spacing: .5px; }
```
